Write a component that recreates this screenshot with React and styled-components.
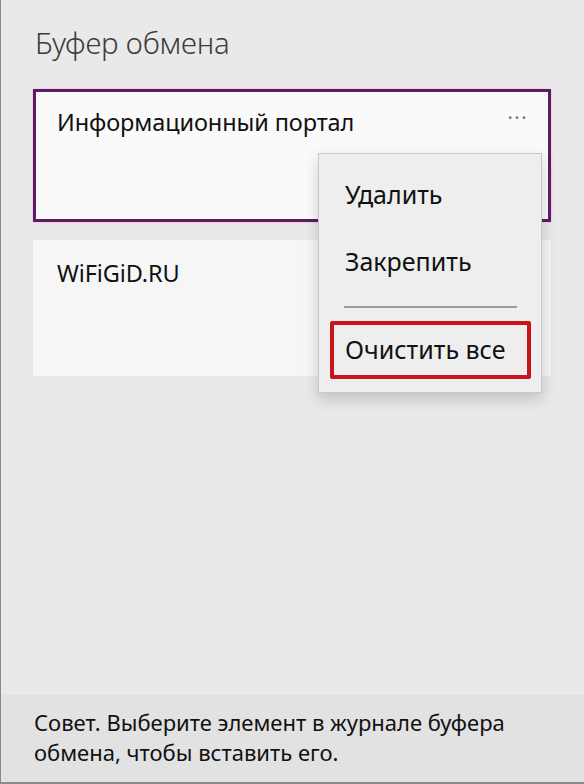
import React from "react";
import styled, { createGlobalStyle } from "styled-components";

const GlobalStyle = createGlobalStyle`
  html, body {
    margin: 0;
    padding: 0;
    background: #e9e9e9;
  }
  body {
    font-family: "Noto Sans", "Open Sans", sans-serif;
  }
`;

const items = [
  { id: 1, text: "Информационный портал", selected: true },
  { id: 2, text: "WiFiGiD.RU", selected: false },
];

const menuItems = [
  { label: "Удалить" },
  { label: "Закрепить", divider: true },
  { label: "Очистить все", highlight: true },
];

function ContextMenu() {
  return (
    <Menu>
      {menuItems.map(({ label, divider, highlight }) => (
        <React.Fragment key={label}>
          <MenuItem highlight={highlight}>{label}</MenuItem>
          {divider && <Divider />}
        </React.Fragment>
      ))}
    </Menu>
  );
}

export default function App() {
  return (
    <>
      <GlobalStyle />
      <Window>
        <Title>Буфер обмена</Title>
        <List>
          {items.map(({ id, text, selected }) => (
            <Card key={id} selected={selected}>
              <CardText>{text}</CardText>
              {selected && <More>···</More>}
              {selected && <ContextMenu />}
            </Card>
          ))}
        </List>
        <Footer>Совет. Выберите элемент в журнале буфера обмена, чтобы вставить его.</Footer>
      </Window>
    </>
  );
}

const Window = styled.div`
  width: 584px;
  height: 784px;
  box-sizing: border-box;
  display: flex;
  flex-direction: column;
  background: #e9e9e9;
  border-left: 1px solid #8a8a8a;
  overflow: hidden;
`;

const Title = styled.div`
  padding: 22px 0 0 34px;
  height: 64px;
  box-sizing: border-box;
  font-size: 29.5px;
  font-weight: 300;
  color: #3c3c3c;
  letter-spacing: -0.2px;
`;

const List = styled.div`
  display: flex;
  flex-direction: column;
  gap: 18px;
  padding: 25px 33px 0 32px;
`;

const Card = styled.div`
  position: relative;
  height: ${(p) => (p.selected ? "133px" : "136px")};
  box-sizing: border-box;
  background: ${(p) => (p.selected ? "#fafafa" : "#f6f6f6")};
  border: 3px solid ${(p) => (p.selected ? "#5e1c63" : "transparent")};
  box-shadow: ${(p) => (p.selected ? "0 0 2px #e8a6ea" : "none")};
  padding: 14px 21px;
`;

const CardText = styled.div`
  font-size: 23.5px;
  color: #111;
  letter-spacing: -0.1px;
`;

const More = styled.div`
  position: absolute;
  top: 12px;
  right: 20px;
  font-size: 20px;
  color: #777;
  letter-spacing: 1.5px;
`;

const Menu = styled.div`
  position: absolute;
  top: 61px;
  left: 282px;
  width: 224px;
  height: 240px;
  box-sizing: border-box;
  z-index: 5;
  background: #eeeeee;
  border: 1px solid #c9c9c9;
  box-shadow: 0 6px 14px rgba(0, 0, 0, 0.18);
  padding: 8px 10px 0 11px;
  display: flex;
  flex-direction: column;
`;

const MenuItem = styled.div`
  height: ${(p) => (p.highlight ? "58px" : "67px")};
  display: flex;
  align-items: center;
  box-sizing: border-box;
  padding-left: ${(p) => (p.highlight ? "11px" : "15px")};
  padding-bottom: ${(p) => (p.highlight ? "2px" : "4px")};
  font-size: 25px;
  color: #111;
  border: ${(p) => (p.highlight ? "4px solid #c8151c" : "none")};
  border-radius: 2px;
`;

const Divider = styled.div`
  height: 2px;
  background: #9a9a9a;
  margin: 10px 14px 13px 14px;
`;

const Footer = styled.div`
  margin-top: auto;
  height: 89px;
  box-sizing: border-box;
  background: #e2e2e2;
  border-bottom: 2px solid #8a8a8a;
  padding: 12px 50px 0 33px;
  font-size: 22px;
  line-height: 30px;
  color: #111;
`;
